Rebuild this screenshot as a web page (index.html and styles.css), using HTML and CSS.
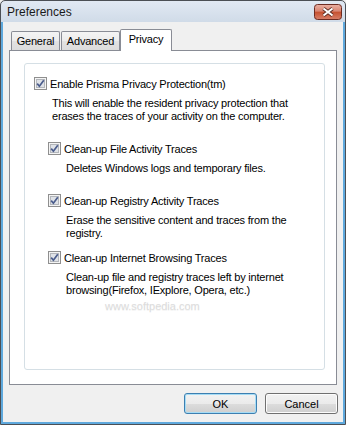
FILE: index.html
```html
<!DOCTYPE html>
<html lang="en">

<head>
    <meta charset="UTF-8">
    <title>Preferences</title>
    <link rel="stylesheet" href="styles.css">
</head>

<body>
    <div class="window">
        <div class="titlebar">
            <span class="title">Preferences</span>
            <span class="close">
                <svg width="28" height="16" viewBox="0 0 28 16">
                    <defs>
                        <linearGradient id="closeFill" x1="0" y1="0" x2="0" y2="1">
                            <stop offset="0" stop-color="#eab1a4" />
                            <stop offset="0.45" stop-color="#d98572" />
                            <stop offset="0.5" stop-color="#c5502f" />
                            <stop offset="1" stop-color="#d8806a" />
                        </linearGradient>
                    </defs>
                    <rect x="0.5" y="0.5" width="27" height="15" rx="3" fill="url(#closeFill)" stroke="#6d2c22" />
                    <path d="M9.5 4.5 L18.5 11.5 M18.5 4.5 L9.5 11.5" stroke="#5a2a22" stroke-width="3.6" />
                    <path d="M9.5 4.5 L18.5 11.5 M18.5 4.5 L9.5 11.5" stroke="#ffffff" stroke-width="2" />
                </svg>
            </span>
        </div>

        <div class="client">
            <div class="tabs">
                <div class="tab tab-general">General</div>
                <div class="tab tab-advanced">Advanced</div>
                <div class="tab tab-privacy active">Privacy</div>
            </div>

            <div class="panel">
                <div class="group">
                    <div class="option">
                        <svg class="check" width="13" height="13" viewBox="0 0 13 13">
                            <rect x="0.5" y="0.5" width="12" height="12" fill="#f4f4f4" stroke="#8f8f8f" />
                            <rect x="2.5" y="2.5" width="8" height="8" fill="#dfe2e7" stroke="#b3b6bb" />
                            <path d="M3.2 6.6 L5.4 9.2 L9.8 3.2" fill="none" stroke="#4a5c8c" stroke-width="1.7" />
                        </svg>
                        <span>Enable Prisma Privacy Protection(tm)</span>
                    </div>
                    <p class="desc">This will enable the resident privacy protection that<br>erases the traces of your activity on the computer.</p>

                    <div class="option sub">
                        <svg class="check" width="13" height="13" viewBox="0 0 13 13">
                            <rect x="0.5" y="0.5" width="12" height="12" fill="#f4f4f4" stroke="#8f8f8f" />
                            <rect x="2.5" y="2.5" width="8" height="8" fill="#dfe2e7" stroke="#b3b6bb" />
                            <path d="M3.2 6.6 L5.4 9.2 L9.8 3.2" fill="none" stroke="#4a5c8c" stroke-width="1.7" />
                        </svg>
                        <span>Clean-up File Activity Traces</span>
                    </div>
                    <p class="desc sub">Deletes Windows logs and temporary files.</p>

                    <div class="option sub">
                        <svg class="check" width="13" height="13" viewBox="0 0 13 13">
                            <rect x="0.5" y="0.5" width="12" height="12" fill="#f4f4f4" stroke="#8f8f8f" />
                            <rect x="2.5" y="2.5" width="8" height="8" fill="#dfe2e7" stroke="#b3b6bb" />
                            <path d="M3.2 6.6 L5.4 9.2 L9.8 3.2" fill="none" stroke="#4a5c8c" stroke-width="1.7" />
                        </svg>
                        <span>Clean-up Registry Activity Traces</span>
                    </div>
                    <p class="desc sub">Erase the sensitive content and traces from the<br>registry.</p>

                    <div class="option sub close-gap">
                        <svg class="check" width="13" height="13" viewBox="0 0 13 13">
                            <rect x="0.5" y="0.5" width="12" height="12" fill="#f4f4f4" stroke="#8f8f8f" />
                            <rect x="2.5" y="2.5" width="8" height="8" fill="#dfe2e7" stroke="#b3b6bb" />
                            <path d="M3.2 6.6 L5.4 9.2 L9.8 3.2" fill="none" stroke="#4a5c8c" stroke-width="1.7" />
                        </svg>
                        <span>Clean-up Internet Browsing Traces</span>
                    </div>
                    <p class="desc sub">Clean-up file and registry traces left by internet<br>browsing(Firefox, IExplore, Opera, etc.)</p>

                    <div class="watermark">www.softpedia.com</div>
                </div>
            </div>

            <div class="buttons">
                <button class="btn default">OK</button>
                <button class="btn">Cancel</button>
            </div>
        </div>
    </div>
</body>

</html>
```

FILE: styles.css
```css
body {
    margin: 0;
    padding: 0;
    font-family: "Liberation Sans", Arial, sans-serif;
    font-size: 11px;
    letter-spacing: -0.2px;
    color: #000;
    background-color: #f0f0f0;
}

.window {
    width: 346px;
    height: 425px;
    box-sizing: border-box;
    border: 1px solid #4b4f55;
    border-radius: 5px 5px 0 0;
    background: linear-gradient(to bottom, #e1e9f3 0, #d0dbe8 21px, #5fa9dd 21px);
    display: flex;
    flex-direction: column;
}

.titlebar {
    height: 21px;
    display: flex;
    justify-content: space-between;
    align-items: flex-start;
}

.title {
    font-size: 12px;
    letter-spacing: 0;
    margin: 4px 0 0 6px;
    color: #1a1a1a;
}

.close {
    margin: 3px 3px 0 0;
    height: 16px;
}

.client {
    flex: 1;
    margin: 0 2px 2px 2px;
    background-color: #f0f0f0;
    display: flex;
    flex-direction: column;
}

/* tabs */
.tabs {
    height: 28px;
    padding-left: 8px;
    display: flex;
    align-items: flex-end;
}

.tab {
    box-sizing: border-box;
    height: 19px;
    border: 1px solid #898c95;
    border-bottom: none;
    border-radius: 2px 2px 0 0;
    background: linear-gradient(to bottom, #f4f4f4 0%, #ececec 50%, #e2e2e2 51%, #dcdcdc 100%);
    text-align: center;
    line-height: 18px;
}

.tab-general {
    width: 49px;
}

.tab-advanced {
    width: 59px;
    margin-left: 1px;
}

.tab-privacy {
    width: 52px;
}

.tab.active {
    height: 22px;
    line-height: 19px;
    background: #fff;
    margin-bottom: -1px;
    position: relative;
    z-index: 1;
}

.panel {
    height: 335px;
    box-sizing: border-box;
    margin: 0 6px;
    border: 1px solid #898c95;
    background-color: #fff;
    padding: 12px 11px 0 14px;
}

.group {
    height: 307px;
    box-sizing: border-box;
    border: 1px solid #d5dfe5;
    border-radius: 3px;
    padding: 13px 0 0 9px;
}

.option {
    height: 13px;
    display: flex;
    align-items: center;
    gap: 3px;
    white-space: nowrap;
}

.option.sub {
    margin: 19px 0 0 14px;
}

.option.close-gap {
    margin-top: 11px;
}

.desc {
    margin: 7px 0 0 18px;
    line-height: 13px;
    white-space: nowrap;
}

.desc.sub {
    margin-left: 32px;
}

.watermark {
    margin: 3px 0 0 71px;
    color: #dcdcdc;
    letter-spacing: 0;
    text-shadow: 0 1px 0 #f4f4f4;
}

/* dialog buttons */
.buttons {
    display: flex;
    justify-content: flex-end;
    gap: 8px;
    padding: 8px 5px 0 0;
}

.btn {
    width: 73px;
    height: 21px;
    box-sizing: border-box;
    border: 1px solid #707070;
    border-radius: 3px;
    background: linear-gradient(to bottom, #f2f2f2 0%, #ebebeb 50%, #dddddd 51%, #cfcfcf 100%);
    box-shadow: inset 0 0 0 1px #fcfcfc;
    font-family: "Liberation Sans", Arial, sans-serif;
    font-size: 11px;
    letter-spacing: 0;
    color: #000;
    padding: 0;
}

.btn.default {
    border-color: #3c7fb1;
    box-shadow: inset 0 0 0 1px #a6dcf5;
}
```
